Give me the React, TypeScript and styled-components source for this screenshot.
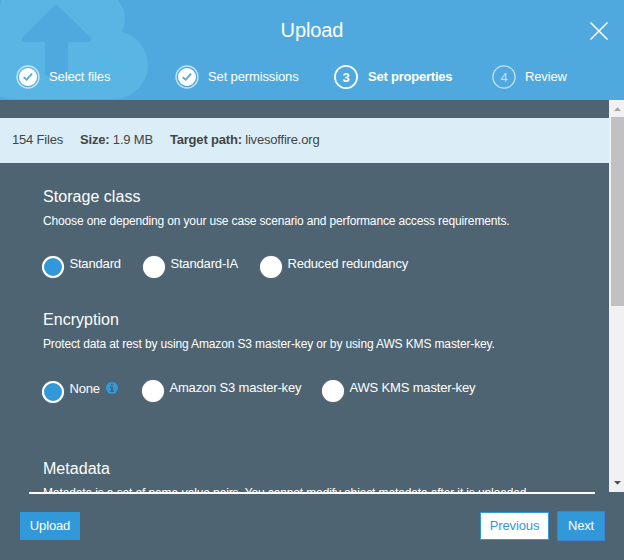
import React from "react";
import styled, { createGlobalStyle, css } from "styled-components";

const GlobalStyle = createGlobalStyle`
  * { box-sizing: border-box; }
  body {
    margin: 0;
    background: #4e6473;
    font-family: "Liberation Sans", Arial, sans-serif;
    font-size: 13px;
    color: #fff;
  }
`;

const Dialog = styled.div`
  width: 624px;
  height: 560px;
  display: flex;
  flex-direction: column;
  overflow: hidden;
  background: #4e6473;
`;

const Header = styled.header`
  position: relative;
  height: 100px;
  flex: none;
  background: #4fa9de;
  overflow: hidden;
`;

const CloudArt = styled.svg`
  position: absolute;
  left: 0;
  top: 0;
`;

const TitleBar = styled.div`
  position: relative;
  height: 62px;
  display: grid;
  grid-template-columns: 1fr auto 1fr;
  align-items: center;
`;

const Title = styled.h1`
  grid-column: 2;
  margin: 0;
  padding-bottom: 3px;
  font-size: 20px;
  line-height: 24px;
  font-weight: 400;
  letter-spacing: -0.1px;
`;

const CloseButton = styled.button`
  justify-self: end;
  width: 20px;
  height: 20px;
  margin-right: 15px;
  padding: 0;
  border: 0;
  background: none;
  svg { display: block; }
`;

const Steps = styled.ol`
  position: relative;
  display: grid;
  grid-template-columns: 159px 159px 158px 1fr;
  margin: 0;
  padding: 0 0 0 16px;
  list-style: none;
`;

const Step = styled.li<{ $active?: boolean }>`
  display: flex;
  align-items: center;
  gap: ${(p) => (p.$active ? 10 : 9)}px;
  height: 30px;
  white-space: nowrap;
  font-weight: ${(p) => (p.$active ? 700 : 400)};
  letter-spacing: ${(p) => (p.$active ? "-0.22px" : "-0.13px")};
`;

const StepLabel = styled.span`
  padding-bottom: 2px;
`;

const StepIcon = styled.svg`
  width: 24px;
  height: 24px;
  flex: none;
  overflow: visible;
`;

const Scroller = styled.div`
  height: 392px;
  flex: none;
  display: flex;
`;

const Content = styled.main`
  width: 609px;
  height: 392px;
  padding-top: 18px;
  overflow: hidden;
`;

const Scrollbar = styled.div`
  width: 15px;
  display: flex;
  flex-direction: column;
  background: #f1f1f1;
`;

const ScrollArrow = styled.svg`
  width: 15px;
  height: 17px;
  flex: none;
`;

const ScrollTrack = styled.div`
  flex: 1;
  padding-left: 2px;
`;

const ScrollThumb = styled.div`
  height: 189px;
  background: #c1c1c1;
`;

const Summary = styled.div`
  height: 45px;
  margin-bottom: 24px;
  padding: 0 12px 2px;
  display: flex;
  align-items: center;
  gap: 17px;
  background: #dbeef8;
  color: #444;
  white-space: nowrap;
  letter-spacing: -0.19px;
`;

const Section = styled.section<{ $height: number }>`
  height: ${(p) => p.$height}px;
  padding-left: 43px;
`;

const Heading = styled.h2`
  margin: 0;
  font-size: 16px;
  line-height: 20px;
  font-weight: 400;
  letter-spacing: 0.04px;
`;

const Description = styled.p<{ $tracking: number }>`
  margin: 6px 0 0;
  font-size: 12px;
  line-height: 16px;
  white-space: nowrap;
  letter-spacing: ${(p) => p.$tracking}px;
`;

const Options = styled.div<{ $columns: string; $top: number }>`
  display: grid;
  grid-template-columns: ${(p) => p.$columns};
  margin: ${(p) => p.$top}px 0 0 -0.6px;
  letter-spacing: -0.16px;
`;

const Option = styled.label<{ $drop?: number }>`
  display: flex;
  align-items: flex-start;
  gap: 5px;
  padding-top: ${(p) => p.$drop ?? 0}px;
  white-space: nowrap;
  line-height: 16px;
`;

const Radio = styled.span<{ $checked?: boolean }>`
  width: 22px;
  height: 22px;
  flex: none;
  border-radius: 50%;
  border: 2px solid #fff;
  background: #fff;
  box-shadow: 0 0 1px 0 #a8a19b;
  ${(p) => p.$checked && css`background: #3199d9;`}
`;

const InfoIcon = styled.svg`
  width: 12px;
  height: 12px;
  margin: 1px 0 0 1px;
`;

const Footer = styled.footer`
  flex: 1;
`;

const Rule = styled.div`
  height: 2px;
  margin: 0 29px;
  background: #fff;
`;

const Actions = styled.div`
  display: flex;
  align-items: center;
  height: 64px;
  padding: 0 19px 0 20px;
`;

const Button = styled.button<{ $kind: "primary" | "outline" | "focused"; $width: number }>`
  width: ${(p) => p.$width}px;
  height: ${(p) => (p.$kind === "focused" ? 30 : 28)}px;
  padding: 0 0 1px;
  border: 1px solid ${(p) => (p.$kind === "focused" ? "#4280d0" : "#3199d9")};
  border-radius: ${(p) => (p.$kind === "focused" ? 1 : 0)}px;
  background: ${(p) => (p.$kind === "outline" ? "#fff" : "#3199d9")};
  color: ${(p) => (p.$kind === "outline" ? "#3199d9" : "#fff")};
  font: 13px "Liberation Sans", Arial, sans-serif;
  letter-spacing: -0.13px;
`;

const ButtonGroup = styled.div`
  display: flex;
  align-items: center;
  gap: 8px;
  margin-left: auto;
`;

function DoneIcon() {
  return (
    <StepIcon viewBox="0 0 24 24">
      <circle cx="12" cy="12" r="11" fill="none" stroke="#fff" strokeOpacity=".65" strokeWidth="1.4" />
      <circle cx="12" cy="12" r="9" fill="#fff" />
      <path d="M7.7 12.2 10.6 14.8 16 8.6" fill="none" stroke="#4fa9de" strokeWidth="1.8" />
    </StepIcon>
  );
}

function NumberIcon({ value, active }: { value: string; active?: boolean }) {
  return (
    <StepIcon viewBox="0 0 24 24" opacity={active ? 1 : 0.65}>
      <circle cx="12" cy="12" r="11.1" fill="none" stroke="#fff" strokeWidth={active ? 1.7 : 1.3} />
      <text x="12" y="17" textAnchor="middle" fontSize="13" fontWeight={active ? 700 : 400} fill="#fff">
        {value}
      </text>
    </StepIcon>
  );
}

export default function App() {
  return (
    <>
      <GlobalStyle />
      <Dialog>
        <Header>
          <CloudArt width="160" height="100" viewBox="0 0 160 100">
            <g fill="#58b5e4">
              <circle cx="39" cy="14" r="40" />
              <circle cx="97" cy="19" r="28" />
              <circle cx="114" cy="65" r="34" />
              <path d="M0 12H114V99H16Q8 99 0 97Z" />
            </g>
            <path
              d="M54 6Q56 4 58 6L90 37Q91 38 91 39Q91 42 87 42H68V72Q68 76 64 76H49Q45 76 45 72V42H26Q22 42 22 39Q22 38 23 37Z"
              fill="#4fa9de"
            />
          </CloudArt>
          <TitleBar>
            <Title>Upload</Title>
            <CloseButton aria-label="Close">
              <svg width="20" height="20" viewBox="0 0 20 20">
                <path d="M1.5 1.5 18.5 18.5M18.5 1.5 1.5 18.5" stroke="#fff" strokeWidth="1.6" />
              </svg>
            </CloseButton>
          </TitleBar>
          <Steps>
            <Step><DoneIcon /><StepLabel>Select files</StepLabel></Step>
            <Step><DoneIcon /><StepLabel>Set permissions</StepLabel></Step>
            <Step $active><NumberIcon value="3" active /><StepLabel>Set properties</StepLabel></Step>
            <Step><NumberIcon value="4" /><StepLabel>Review</StepLabel></Step>
          </Steps>
        </Header>
        <Scroller>
          <Content>
            <Summary>
              <span>154 Files</span>
              <span><b>Size:</b> 1.9 MB</span>
              <span><b>Target path:</b> livesoffire.org</span>
            </Summary>
            <Section $height={123}>
              <Heading>Storage class</Heading>
              <Description $tracking={-0.15}>
                Choose one depending on your use case scenario and performance access requirements.
              </Description>
              <Options $columns="101px 117px auto" $top={27}>
                <Option><Radio $checked />Standard</Option>
                <Option><Radio />Standard-IA</Option>
                <Option><Radio />Reduced redundancy</Option>
              </Options>
            </Section>
            <Section $height={149}>
              <Heading>Encryption</Heading>
              <Description $tracking={-0.135}>
                Protect data at rest by using Amazon S3 master-key or by using AWS KMS master-key.
              </Description>
              <Options $columns="100px 180px auto" $top={28}>
                <Option $drop={1}><Radio $checked />None
                  <InfoIcon viewBox="0 0 12 12">
                    <circle cx="6" cy="6" r="6" fill="#3199d9" />
                    <path d="M5 1.7H7V3.6H5ZM4 4.6H7V8.5H8V10H4V8.5H5V6H4Z" fill="#4e6473" />
                  </InfoIcon>
                </Option>
                <Option><Radio />Amazon S3 master-key</Option>
                <Option><Radio />AWS KMS master-key</Option>
              </Options>
            </Section>
            <Section $height={60}>
              <Heading>Metadata</Heading>
              <Description $tracking={-0.125}>
                Metadata is a set of name-value pairs. You cannot modify object metadata after it is uploaded.
              </Description>
            </Section>
          </Content>
          <Scrollbar>
            <ScrollArrow viewBox="0 0 15 17"><path d="M5 11H12L8.5 7.3Z" fill="#a3a3a3" /></ScrollArrow>
            <ScrollTrack><ScrollThumb /></ScrollTrack>
            <ScrollArrow viewBox="0 0 15 17"><path d="M5 6H12L8.5 9.7Z" fill="#505050" /></ScrollArrow>
          </Scrollbar>
        </Scroller>
        <Footer>
          <Rule />
          <Actions>
            <Button $kind="primary" $width={60}>Upload</Button>
            <ButtonGroup>
              <Button $kind="outline" $width={69}>Previous</Button>
              <Button $kind="focused" $width={48}>Next</Button>
            </ButtonGroup>
          </Actions>
        </Footer>
      </Dialog>
    </>
  );
}
